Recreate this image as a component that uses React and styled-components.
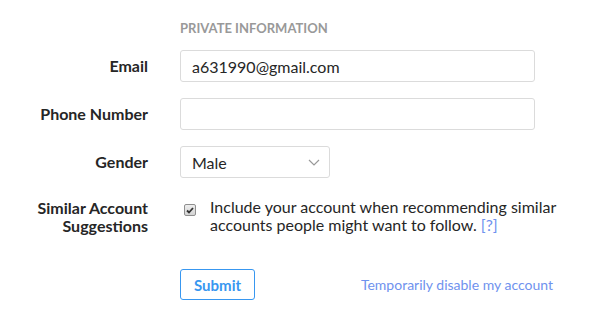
import React, { useState } from "react"
import styled, { createGlobalStyle } from "styled-components"

const Global = createGlobalStyle`
  body {
    margin: 0;
    background: #fff;
    font-family: "Lato", "Open Sans", sans-serif;
    color: #262626;
  }
`

const Form = styled.form`
  display: grid;
  grid-template-columns: 148px 400px;
  column-gap: 32px;
  row-gap: 16px;
  padding-top: 20px;
  align-items: center;
`

const Heading = styled.div`
  grid-column: 2;
  font-size: 13px;
  font-weight: 700;
  color: #999;
  text-transform: uppercase;
  height: 14px;
  line-height: 16px;
`

const Label = styled.label`
  text-align: right;
  font-size: 16px;
  font-weight: 700;
  line-height: 18px;
  align-self: ${p => (p.top ? "start" : "center")};
  margin-top: ${p => (p.top ? "5px" : "0")};
`

const Input = styled.input`
  box-sizing: border-box;
  width: ${p => p.width || 355}px;
  height: 32px;
  border: 1px solid #dbdbdb;
  border-radius: 3px;
  padding: 0 11px;
  font-family: inherit;
  font-size: 16px;
  color: #262626;
  outline: none;
`

const SelectWrap = styled.div`
  position: relative;
  width: 150px;
  height: 32px;
`

const Select = styled.select`
  box-sizing: border-box;
  width: 100%;
  height: 100%;
  appearance: none;
  border: 1px solid #dbdbdb;
  border-radius: 3px;
  background: #fff;
  padding: 0 11px;
  font-family: inherit;
  font-size: 16px;
  color: #262626;
  outline: none;
`

const Chevron = styled.svg`
  position: absolute;
  right: 10px;
  top: 13px;
  pointer-events: none;
`

const CheckRow = styled.div`
  display: flex;
  align-items: flex-start;
  gap: 14px;
  padding-left: 4px;
  margin-top: 3px;
`

const Box = styled.span`
  flex: none;
  box-sizing: border-box;
  width: 12px;
  height: 12px;
  margin-top: 6px;
  border: 1px solid #8f8f8f;
  border-radius: 2px;
  background: linear-gradient(#eee, #d4d4d4);
  display: flex;
  align-items: center;
  justify-content: center;
`

const CheckText = styled.p`
  margin: 0;
  width: 352px;
  font-size: 16px;
  line-height: 18px;
  color: #262626;
`

const Help = styled.a`
  margin-left: 4px;
  color: #6f92ee;
  text-decoration: none;
`

const Actions = styled.div`
  grid-column: 2;
  width: 373px;
  display: flex;
  align-items: center;
  justify-content: space-between;
  margin-top: 18px;
`

const SubmitButton = styled.button`
  box-sizing: border-box;
  height: 31px;
  padding: 0 13px;
  border: 1px solid #3897f0;
  border-radius: 3px;
  background: #fff;
  color: #3897f0;
  font-family: inherit;
  font-size: 15px;
  font-weight: 700;
  cursor: pointer;
`

const Link = styled.a`
  color: #6f92ee;
  font-size: 14px;
  text-decoration: none;
`

const App = () => {
  const [email, setEmail] = useState("a631990@gmail.com")
  const [phone, setPhone] = useState("")
  const [gender, setGender] = useState("male")

  return (
    <>
      <Global />
      <Form onSubmit={e => e.preventDefault()}>
        <Heading>Private Information</Heading>

        <Label>Email</Label>
        <Input value={email} onChange={e => setEmail(e.target.value)} />

        <Label>Phone Number</Label>
        <Input value={phone} onChange={e => setPhone(e.target.value)} />

        <Label>Gender</Label>
        <SelectWrap>
          <Select value={gender} onChange={e => setGender(e.target.value)}>
            <option value="male">Male</option>
            <option value="female">Female</option>
            <option value="none">Not Specified</option>
          </Select>
          <Chevron width="12" height="7" viewBox="0 0 12 7">
            <path d="M1 1l5 5 5-5" fill="none" stroke="#999" strokeWidth="1.2" />
          </Chevron>
        </SelectWrap>

        <Label top>Similar Account<br />Suggestions</Label>
        <CheckRow>
          <Box>
            <svg width="8" height="7" viewBox="0 0 8 7">
              <path d="M1 3.5l2 2L7 1" fill="none" stroke="#333" strokeWidth="1.8" />
            </svg>
          </Box>
          <CheckText>
            Include your account when recommending similar accounts people might want to follow.
            <Help href="#">[?]</Help>
          </CheckText>
        </CheckRow>

        <Actions>
          <SubmitButton type="submit">Submit</SubmitButton>
          <Link href="#">Temporarily disable my account</Link>
        </Actions>
      </Form>
    </>
  )
}

export default App
